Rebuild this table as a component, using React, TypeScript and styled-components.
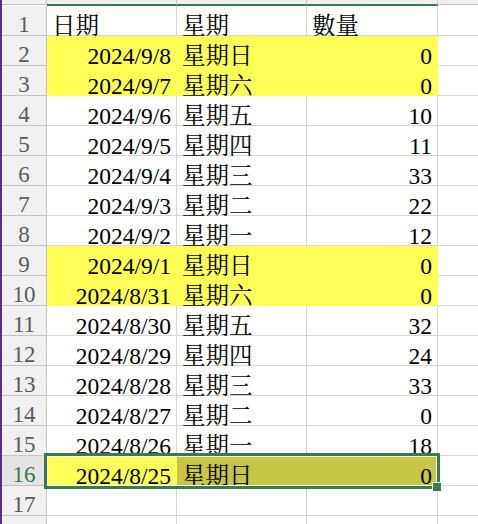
import React from "react";
import styled, { createGlobalStyle } from "styled-components";

const Global = createGlobalStyle`
  html, body { margin: 0; padding: 0; background: #fff; overflow: hidden; }
  body { width: 478px; height: 524px; }
`;

const FONT = `"Liberation Serif", "Noto Serif CJK TC", "Noto Sans CJK TC", serif`;
const GRID = "#d6d6d6";
const HEAD_LINE = "#c4c4c4";
const GREEN = "#3a7a4c";
const YELLOW = "#ffff57";
const OLIVE = "#c9c545";

const Page = styled.div`
  display: flex;
  width: 478px;
  height: 524px;
  overflow: hidden;
`;

const Strip = styled.div`
  width: 2px;
  flex: none;
  background: #5e2a86;
`;

const Sheet = styled.div`
  position: relative;
  flex: 1;
  display: grid;
  grid-template-columns: 45px 130px 130px 131px 60px;
  grid-auto-rows: 30px;
  grid-template-rows: 6px;
  align-content: start;
  font-family: ${FONT};
`;

const HeadCell = styled.div<{ $sel?: boolean }>`
  box-sizing: border-box;
  background: #f0f0f0;
  border-right: 1px solid ${HEAD_LINE};
  border-bottom: ${(p) => (p.$sel ? `2px solid ${GREEN}` : `1px solid ${HEAD_LINE}`)};
  margin-bottom: ${(p) => (p.$sel ? "0" : "1px")};
`;

const RowHead = styled.div<{ $active?: boolean }>`
  box-sizing: border-box;
  display: flex;
  align-items: flex-end;
  justify-content: center;
  background: ${(p) => (p.$active ? "#e4e4e4" : "#f0f0f0")};
  border-right: 1px solid ${HEAD_LINE};
  border-bottom: 1px solid ${HEAD_LINE};
  color: ${(p) => (p.$active ? GREEN : "#5a5a5a")};
  font-size: 23px;
  line-height: 18px;
  padding-bottom: 1px;
`;

const Cell = styled.div<{ $fill?: string; $align?: "left" | "right" }>`
  box-sizing: border-box;
  display: flex;
  align-items: flex-end;
  justify-content: ${(p) => (p.$align === "right" ? "flex-end" : "flex-start")};
  padding: 0 5px 0 5px;
  background: ${(p) => p.$fill || "#fff"};
  border-right: 1px solid ${(p) => p.$fill || GRID};
  border-bottom: 1px solid ${(p) => p.$fill || GRID};
  color: #000;
  font-size: 23.5px;
  line-height: 18px;
  white-space: nowrap;
`;

const Selection = styled.div`
  position: absolute;
  left: 42px;
  top: 453px;
  width: 396px;
  height: 36px;
  box-sizing: border-box;
  border: 3px solid ${GREEN};
  box-shadow: inset 0 0 0 1px #fff;
  pointer-events: none;
`;

const Handle = styled.div`
  position: absolute;
  right: -5px;
  bottom: -6px;
  width: 10px;
  height: 10px;
  box-sizing: border-box;
  background: ${GREEN};
  border: 1px solid #fff;
`;

type Row = { date: string; day: string; qty: string; hl?: boolean };

const rows: Row[] = [
  { date: "2024/9/8", day: "星期日", qty: "0", hl: true },
  { date: "2024/9/7", day: "星期六", qty: "0", hl: true },
  { date: "2024/9/6", day: "星期五", qty: "10" },
  { date: "2024/9/5", day: "星期四", qty: "11" },
  { date: "2024/9/4", day: "星期三", qty: "33" },
  { date: "2024/9/3", day: "星期二", qty: "22" },
  { date: "2024/9/2", day: "星期一", qty: "12" },
  { date: "2024/9/1", day: "星期日", qty: "0", hl: true },
  { date: "2024/8/31", day: "星期六", qty: "0", hl: true },
  { date: "2024/8/30", day: "星期五", qty: "32" },
  { date: "2024/8/29", day: "星期四", qty: "24" },
  { date: "2024/8/28", day: "星期三", qty: "33" },
  { date: "2024/8/27", day: "星期二", qty: "0" },
  { date: "2024/8/26", day: "星期一", qty: "18" },
  { date: "2024/8/25", day: "星期日", qty: "0", hl: true },
];

export default function App() {
  const activeRow = 16;
  return (
    <>
      <Global />
      <Page>
        <Strip />
        <Sheet>
          <HeadCell />
          <HeadCell $sel />
          <HeadCell $sel />
          <HeadCell $sel />
          <HeadCell />

          <RowHead>1</RowHead>
          <Cell>日期</Cell>
          <Cell>星期</Cell>
          <Cell>數量</Cell>
          <Cell />

          {rows.map((r, i) => {
            const n = i + 2;
            const active = n === activeRow;
            const fill = r.hl ? YELLOW : undefined;
            const selFill = active ? OLIVE : fill;
            return (
              <React.Fragment key={n}>
                <RowHead $active={active}>{n}</RowHead>
                <Cell $fill={fill} $align="right">{r.date}</Cell>
                <Cell $fill={selFill}>{r.day}</Cell>
                <Cell $fill={selFill} $align="right">{r.qty}</Cell>
                <Cell />
              </React.Fragment>
            );
          })}

          <RowHead>17</RowHead>
          <Cell />
          <Cell />
          <Cell />
          <Cell />

          <RowHead />
          <Cell />
          <Cell />
          <Cell />
          <Cell />

          <Selection>
            <Handle />
          </Selection>
        </Sheet>
      </Page>
    </>
  );
}
